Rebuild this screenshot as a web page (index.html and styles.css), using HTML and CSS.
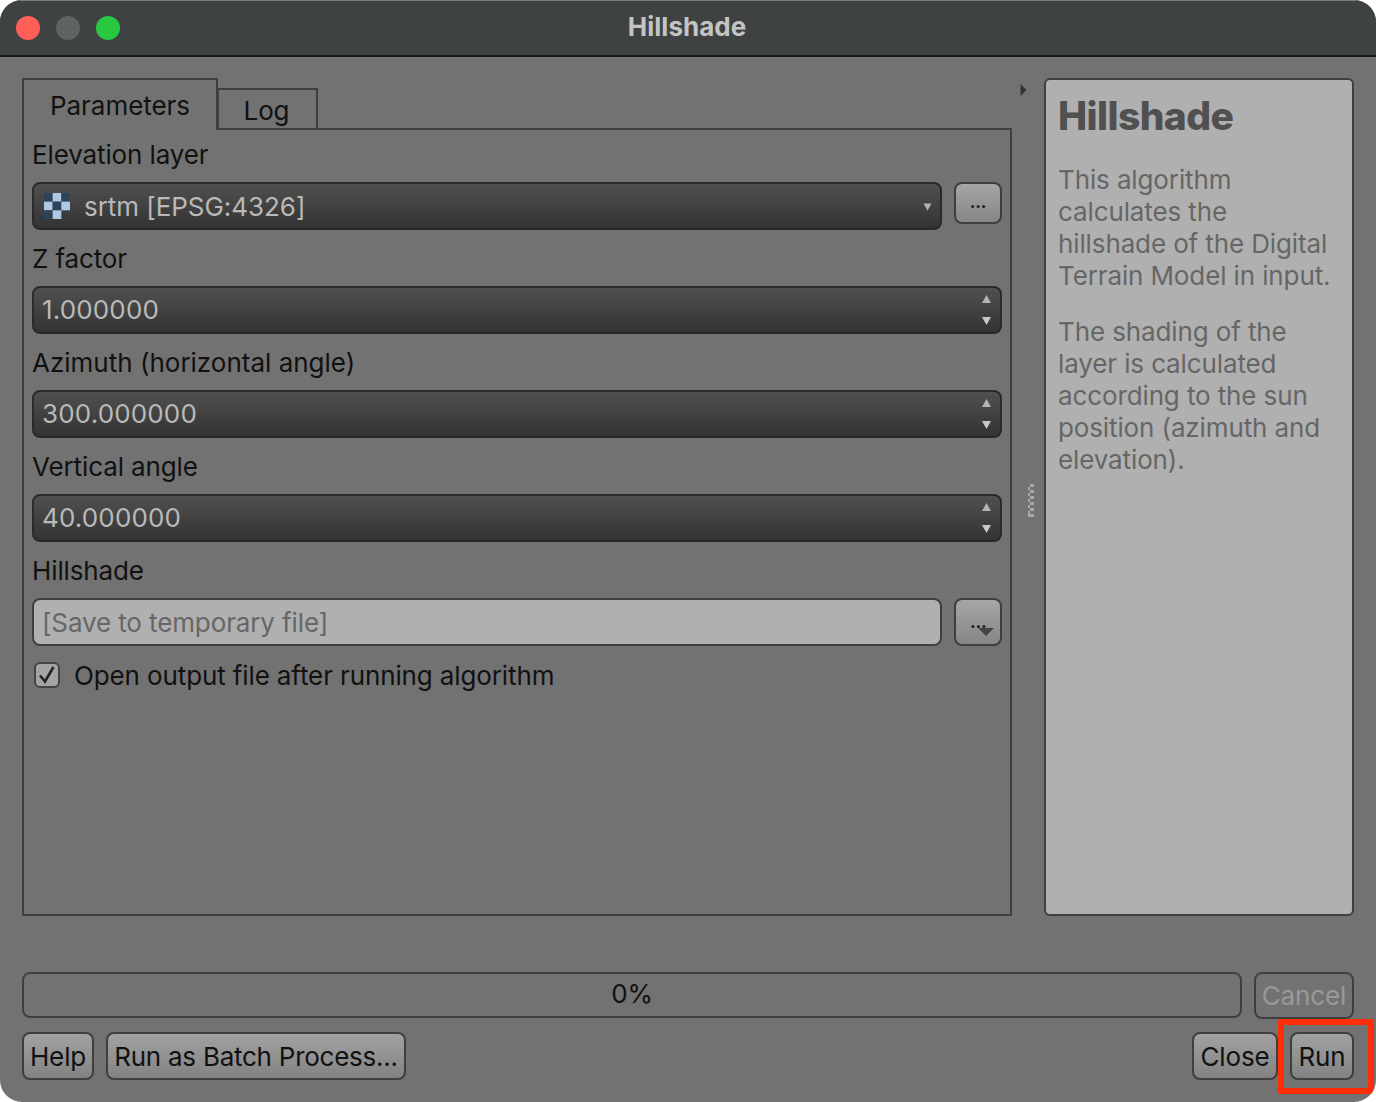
FILE: index.html
```html
<!DOCTYPE html>
<html lang="en">
<head>
  <meta charset="UTF-8" />
  <title>Hillshade</title>
  <link rel="stylesheet" href="styles.css">
</head>
<body>
<div class="window">
  <div class="titlebar">
    <div class="lights">
      <span class="light red"></span>
      <span class="light grey"></span>
      <span class="light green"></span>
    </div>
    <div class="title">Hillshade</div>
  </div>

  <div class="content">
    <div class="main">
      <div class="left">
        <div class="tabs">
          <div class="tab active">Parameters</div>
          <div class="tab">Log</div>
        </div>
        <div class="pane">
          <div class="label">Elevation layer</div>
          <div class="row">
            <div class="field dark">
              <svg class="layer-icon" width="26" height="26" viewBox="0 0 3 3">
                <rect x="0" y="0" width="1" height="1" fill="#2d4358"/>
                <rect x="1" y="0" width="1" height="1" fill="#adc9e6"/>
                <rect x="2" y="0" width="1" height="1" fill="#2d4358"/>
                <rect x="0" y="1" width="1" height="1" fill="#adc9e6"/>
                <rect x="1" y="1" width="1" height="1" fill="#2d4358"/>
                <rect x="2" y="1" width="1" height="1" fill="#adc9e6"/>
                <rect x="0" y="2" width="1" height="1" fill="#2d4358"/>
                <rect x="1" y="2" width="1" height="1" fill="#adc9e6"/>
              </svg>
              <span class="value layer">srtm [EPSG:4326]</span>
              <svg class="combo-arrow" width="9" height="8" viewBox="0 0 9 8"><path d="M0.5 0.5h8L4.5 7.5z" fill="#b4b4b4"/></svg>
            </div>
            <div class="btn-small">...</div>
          </div>

          <div class="label">Z factor</div>
          <div class="field dark">
            <span class="value num">1.000000</span>
            <div class="spin">
              <svg width="9" height="8" viewBox="0 0 9 8"><path d="M0 8h9L4.5 0z" fill="#b4b4b4"/></svg>
              <svg width="9" height="8" viewBox="0 0 9 8"><path d="M0 0h9L4.5 8z" fill="#c8c8c8"/></svg>
            </div>
          </div>

          <div class="label wide">Azimuth (horizontal angle)</div>
          <div class="field dark">
            <span class="value num">300.000000</span>
            <div class="spin">
              <svg width="9" height="8" viewBox="0 0 9 8"><path d="M0 8h9L4.5 0z" fill="#b4b4b4"/></svg>
              <svg width="9" height="8" viewBox="0 0 9 8"><path d="M0 0h9L4.5 8z" fill="#c8c8c8"/></svg>
            </div>
          </div>

          <div class="label">Vertical angle</div>
          <div class="field dark">
            <span class="value num">40.000000</span>
            <div class="spin">
              <svg width="9" height="8" viewBox="0 0 9 8"><path d="M0 8h9L4.5 0z" fill="#b4b4b4"/></svg>
              <svg width="9" height="8" viewBox="0 0 9 8"><path d="M0 0h9L4.5 8z" fill="#c8c8c8"/></svg>
            </div>
          </div>

          <div class="label">Hillshade</div>
          <div class="row">
            <div class="field light">[Save to temporary file]</div>
            <div class="btn-small tall">
              <span class="dots">...</span>
              <svg class="menu-arrow" width="16" height="8" viewBox="0 0 16 8"><path d="M0 0h16L8 8z" fill="#444"/></svg>
            </div>
          </div>

          <div class="check-row">
            <span class="checkbox">
              <svg width="22" height="22" viewBox="0 0 22 22"><path d="M4 11.5l5 6 8.5-14.5" fill="none" stroke="#222" stroke-width="2.6"/></svg>
            </span>
            <span>Open output file after running algorithm</span>
          </div>
        </div>
      </div>

      <div class="splitter">
        <svg class="collapse" width="7" height="12" viewBox="0 0 7 12"><path d="M0.5 0L6.5 6L0.5 12z" fill="#333"/></svg>
        <svg class="grip" width="6" height="35" viewBox="0 0 6 35">
          <g fill="#a8a8a8">
            <rect x="2" y="0" width="4" height="3"/>
            <rect x="0" y="3" width="2" height="3"/>
            <rect x="2" y="6" width="4" height="3"/>
            <rect x="0" y="9" width="2" height="3"/>
            <rect x="2" y="12" width="4" height="3"/>
            <rect x="0" y="15" width="2" height="3"/>
            <rect x="2" y="18" width="4" height="3"/>
            <rect x="0" y="21" width="2" height="3"/>
            <rect x="2" y="24" width="4" height="3"/>
            <rect x="0" y="27" width="2" height="3"/>
            <rect x="0" y="30" width="6" height="3"/>
          </g>
        </svg>
      </div>

      <div class="help">
        <h2>Hillshade</h2>
        <p>This algorithm calculates the hillshade of the Digital Terrain Model in input.</p>
        <p>The shading of the layer is calculated according to the sun position (azimuth and elevation).</p>
      </div>
    </div>

    <div class="progress-row">
      <div class="progress">0%</div>
      <div class="btn cancel">Cancel</div>
    </div>

    <div class="button-row">
      <div class="btn help-btn">Help</div>
      <div class="btn batch">Run as Batch Process...</div>
      <div class="spacer"></div>
      <div class="btn close">Close</div>
      <div class="btn run">Run</div>
    </div>
  </div>

  <div class="highlight"></div>
</div>
</body>
</html>
```

FILE: styles.css
```css
* {
  box-sizing: border-box;
}

html, body {
  margin: 0;
  padding: 0;
  background: #fff;
}

body {
  font-family: Inter, "Liberation Sans", sans-serif;
  font-size: 26px;
  letter-spacing: -0.12px;
  color: #111;
}

.window {
  position: relative;
  width: 1376px;
  height: 1102px;
  background: #727272;
  border-radius: 22px;
  overflow: hidden;
}

.titlebar {
  position: relative;
  height: 57px;
  background: #3e4242;
  border-top: 1px solid #7a7c7c;
  border-bottom: 2px solid #161818;
  display: flex;
  align-items: center;
  justify-content: center;
}

.lights {
  position: absolute;
  left: 16px;
  top: 15px;
  display: flex;
  gap: 16px;
}

.light {
  width: 24px;
  height: 24px;
  border-radius: 50%;
}

.red { background: #ff5f57; }
.grey { background: #5e6263; }
.green { background: #28c840; }

.title {
  font-weight: 700;
  font-size: 26px;
  letter-spacing: 0;
  color: #c4c4c4;
  margin-top: -4px;
  margin-right: 2px;
}

.content {
  padding: 21px 22px 0;
}

.main {
  display: flex;
  height: 838px;
}

.left {
  width: 990px;
  display: flex;
  flex-direction: column;
}

.tabs {
  display: flex;
  align-items: flex-end;
  height: 52px;
  margin-bottom: -2px;
  position: relative;
}

.tab {
  height: 42px;
  width: 101px;
  margin-left: -1px;
  border: 2px solid #3f3f3f;
  display: flex;
  align-items: center;
  justify-content: center;
  padding: 2px 2px 0 0;
}

.tab.active {
  height: 52px;
  width: 196px;
  margin-left: 0;
  border-bottom: 0;
  background: #727272;
  position: relative;
  z-index: 1;
  align-items: flex-start;
  padding: 10px 0 0;
  letter-spacing: -0.05px;
}

.pane {
  flex: 1;
  border: 2px solid #3f3f3f;
  padding: 9px 8px 0;
}

.label {
  height: 32px;
  line-height: 32px;
  margin-bottom: 11px;
}

.label.wide {
  letter-spacing: 0;
}

.row {
  display: flex;
  align-items: flex-start;
  gap: 12px;
  margin-bottom: 13px;
}

.row .field {
  flex: 1;
  margin-bottom: 0;
}

.field {
  height: 48px;
  border-radius: 8px;
  border: 2px solid #2a2a2a;
  display: flex;
  align-items: center;
  padding: 0 8px;
  margin-bottom: 13px;
  position: relative;
}

.field.dark {
  background: linear-gradient(to bottom, #505050, #333333);
  color: #b9b9b9;
}

.field.light {
  background: #b0b0b0;
  border-color: #3f3f3f;
  color: #666;
}

.value.layer {
  letter-spacing: -0.05px;
}

.value.num {
  letter-spacing: 0.15px;
  margin-top: -1px;
}

.layer-icon {
  margin-left: 2px;
  margin-right: 14px;
}

.combo-arrow {
  position: absolute;
  right: 8px;
  top: 19px;
}

.spin {
  position: absolute;
  right: 9px;
  top: 7px;
  height: 30px;
  display: flex;
  flex-direction: column;
  justify-content: space-between;
}

.spin svg {
  display: block;
}

.btn-small {
  position: relative;
  width: 48px;
  height: 42px;
  border: 2px solid #3f3f3f;
  border-radius: 8px;
  background: linear-gradient(to bottom, #a6a6a6, #868686);
  text-align: center;
  line-height: 36px;
  font-size: 17px;
  font-weight: 700;
}

.btn-small.tall {
  height: 48px;
  line-height: 42px;
  text-align: left;
  padding-left: 14px;
}

.dots {
  position: relative;
  top: 1px;
}

.menu-arrow {
  position: absolute;
  right: 6px;
  bottom: 8px;
}

.check-row {
  display: flex;
  align-items: center;
  gap: 14px;
  margin-top: -2px;
  padding-left: 2px;
  height: 36px;
}

.checkbox {
  width: 26px;
  height: 26px;
  border: 2px solid #444;
  border-radius: 6px;
  background: #a4a4a4;
  display: flex;
  align-items: center;
  justify-content: center;
}

.splitter {
  position: relative;
  width: 32px;
}

.collapse {
  position: absolute;
  left: 8px;
  top: 6px;
}

.grip {
  position: absolute;
  left: 16px;
  top: 406px;
}

.help {
  width: 310px;
  background: #b0b0b0;
  border: 2px solid #3f3f3f;
  border-radius: 6px;
  padding: 0 12px;
  color: #666;
  line-height: 32px;
}

.help h2 {
  margin: 12px 0 24px;
  font-size: 39px;
  line-height: 48px;
  font-weight: 800;
  letter-spacing: -0.6px;
  color: #505050;
}

.help p {
  margin: 0 0 24px;
}

.progress-row {
  display: flex;
  gap: 12px;
  margin-top: 56px;
}

.progress {
  flex: 1;
  height: 46px;
  border: 2px solid #3f3f3f;
  border-radius: 8px;
  text-align: center;
  line-height: 40px;
}

.btn {
  height: 48px;
  border: 2px solid #3f3f3f;
  border-radius: 8px;
  background: linear-gradient(to bottom, #a2a2a2, #828282);
  display: flex;
  align-items: center;
  justify-content: center;
}

.btn.cancel {
  width: 100px;
  height: 47px;
  background: none;
  color: #999;
}

.button-row {
  display: flex;
  gap: 12px;
  margin-top: 13px;
}

.spacer {
  flex: 1;
}

.help-btn { width: 72px; }
.batch { width: 300px; letter-spacing: -0.25px; }
.close { width: 86px; }
.run { width: 64px; }

.highlight {
  position: absolute;
  left: 1278px;
  top: 1019px;
  width: 96px;
  height: 75px;
  border: 6px solid #ff2d0a;
  border-radius: 2px;
}
```
